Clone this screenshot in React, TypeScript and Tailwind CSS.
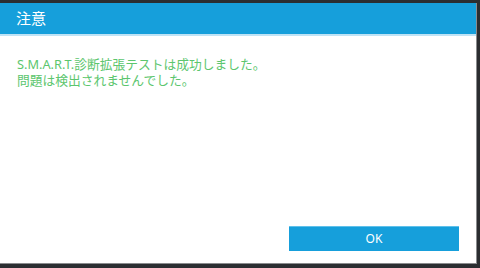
export default function App() {
  return (
    <div
      className="w-[480px] h-[268px] bg-[#2b2e31] pt-[3px] overflow-hidden"
      style={{ fontFamily: '"Noto Sans", "Noto Sans CJK JP", sans-serif' }}
    >
      <div className="w-[477px] h-[261px] flex flex-col bg-white border-r border-b border-[#8a8c8e]">
        {/* Header */}
        <div className="h-[33px] shrink-0 bg-[#169fdb] flex items-center pl-[16px] border-b-2 border-[#bfe3f5]">
          <span className="text-white text-[15px] leading-none">注意</span>
        </div>

        {/* Message */}
        <div className="flex-1 pl-[17px] pt-[20px] text-[12.75px] leading-[16px] text-[#5cc66e]">
          <p>
            S.M.A.R.T.診断拡張テストは成功しました。
            <br />
            問題は検出されませんでした。
          </p>
        </div>

        {/* Footer */}
        <div className="flex justify-end pr-[17px] pb-[12px]">
          <button className="w-[170px] h-[25px] bg-[#169fdb] border-t border-[#5fc0ea] text-white text-[12px] leading-none">
            OK
          </button>
        </div>
      </div>
    </div>
  );
}
